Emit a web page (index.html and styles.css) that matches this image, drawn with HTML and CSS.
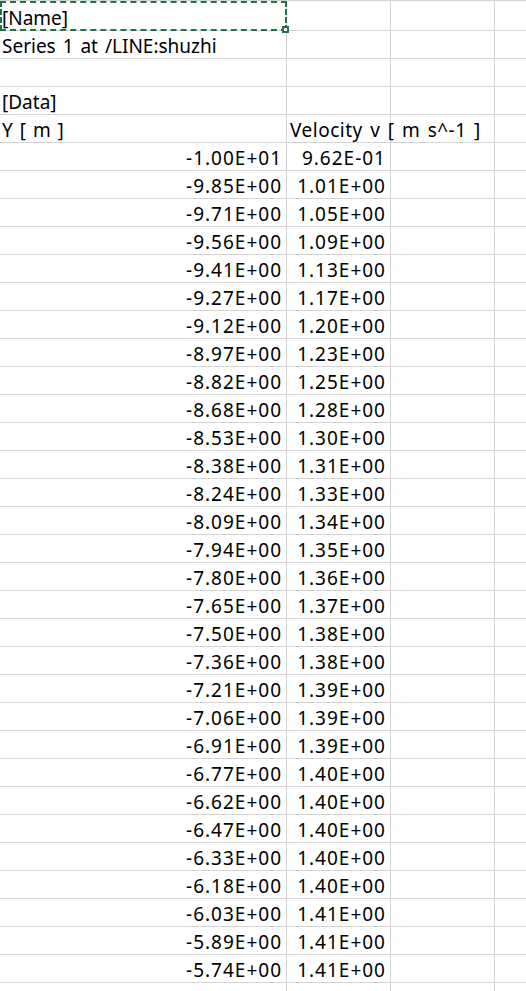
FILE: index.html
```html
<!DOCTYPE html>
<html>
<head>
<meta charset="utf-8">
<link rel="stylesheet" href="styles.css">
</head>
<body>
<div class="sheet">
<table class="grid">
<colgroup><col class="ca"><col class="cb"><col class="cc"><col class="cd"></colgroup>
<tbody id="rows">
<tr class="first"><td class="sel">[Name]<span class="handle"></span></td><td></td><td></td><td></td></tr>
<tr><td>Series 1 at /LINE:shuzhi</td><td></td><td></td><td></td></tr>
<tr><td></td><td></td><td></td><td></td></tr>
<tr><td>[Data]</td><td></td><td></td><td></td></tr>
<tr><td>Y [ m ]</td><td class="vel">Velocity v [ m s^-1 ]</td><td></td><td></td></tr>
<tr><td class="num">-1.00E+01</td><td class="num">9.62E-01</td><td></td><td></td></tr>
<tr><td class="num">-9.85E+00</td><td class="num">1.01E+00</td><td></td><td></td></tr>
<tr><td class="num">-9.71E+00</td><td class="num">1.05E+00</td><td></td><td></td></tr>
<tr><td class="num">-9.56E+00</td><td class="num">1.09E+00</td><td></td><td></td></tr>
<tr><td class="num">-9.41E+00</td><td class="num">1.13E+00</td><td></td><td></td></tr>
<tr><td class="num">-9.27E+00</td><td class="num">1.17E+00</td><td></td><td></td></tr>
<tr><td class="num">-9.12E+00</td><td class="num">1.20E+00</td><td></td><td></td></tr>
<tr><td class="num">-8.97E+00</td><td class="num">1.23E+00</td><td></td><td></td></tr>
<tr><td class="num">-8.82E+00</td><td class="num">1.25E+00</td><td></td><td></td></tr>
<tr><td class="num">-8.68E+00</td><td class="num">1.28E+00</td><td></td><td></td></tr>
<tr><td class="num">-8.53E+00</td><td class="num">1.30E+00</td><td></td><td></td></tr>
<tr><td class="num">-8.38E+00</td><td class="num">1.31E+00</td><td></td><td></td></tr>
<tr><td class="num">-8.24E+00</td><td class="num">1.33E+00</td><td></td><td></td></tr>
<tr><td class="num">-8.09E+00</td><td class="num">1.34E+00</td><td></td><td></td></tr>
<tr><td class="num">-7.94E+00</td><td class="num">1.35E+00</td><td></td><td></td></tr>
<tr><td class="num">-7.80E+00</td><td class="num">1.36E+00</td><td></td><td></td></tr>
<tr><td class="num">-7.65E+00</td><td class="num">1.37E+00</td><td></td><td></td></tr>
<tr><td class="num">-7.50E+00</td><td class="num">1.38E+00</td><td></td><td></td></tr>
<tr><td class="num">-7.36E+00</td><td class="num">1.38E+00</td><td></td><td></td></tr>
<tr><td class="num">-7.21E+00</td><td class="num">1.39E+00</td><td></td><td></td></tr>
<tr><td class="num">-7.06E+00</td><td class="num">1.39E+00</td><td></td><td></td></tr>
<tr><td class="num">-6.91E+00</td><td class="num">1.39E+00</td><td></td><td></td></tr>
<tr><td class="num">-6.77E+00</td><td class="num">1.40E+00</td><td></td><td></td></tr>
<tr><td class="num">-6.62E+00</td><td class="num">1.40E+00</td><td></td><td></td></tr>
<tr><td class="num">-6.47E+00</td><td class="num">1.40E+00</td><td></td><td></td></tr>
<tr><td class="num">-6.33E+00</td><td class="num">1.40E+00</td><td></td><td></td></tr>
<tr><td class="num">-6.18E+00</td><td class="num">1.40E+00</td><td></td><td></td></tr>
<tr><td class="num">-6.03E+00</td><td class="num">1.41E+00</td><td></td><td></td></tr>
<tr><td class="num">-5.89E+00</td><td class="num">1.41E+00</td><td></td><td></td></tr>
<tr><td class="num">-5.74E+00</td><td class="num">1.41E+00</td><td></td><td></td></tr>
<tr><td class="num">-5.59E+00</td><td class="num">1.41E+00</td><td></td><td></td></tr>
</tbody>
</table>
</div>
</body>
</html>
```

FILE: styles.css
```css
html, body {
  margin: 0;
  padding: 0;
  background: #ffffff;
}
.sheet {
  width: 526px;
  height: 991px;
  overflow: hidden;
}
.grid {
  border-collapse: separate;
  border-spacing: 0;
  table-layout: fixed;
  width: 599px;
  font-family: "Noto Sans", "Liberation Sans", sans-serif;
  font-size: 19px;
  color: #000000;
  border-top: 1px solid #d4d4d4;
  word-spacing: 2px;
}
.ca { width: 287px; }
.cb { width: 104px; }
.cc { width: 104px; }
.cd { width: 104px; }
.grid td {
  height: 26px;
  padding: 0 0 0 2px;
  border-right: 1px solid #d4d4d4;
  border-bottom: 1px solid #d4d4d4;
  white-space: nowrap;
  overflow: visible;
  vertical-align: bottom;
  line-height: 22px;
  box-sizing: content-box;
  padding-bottom: 1px;
}
.grid tr.first td {
  height: 28px;
}
.grid td.num {
  text-align: right;
  padding: 0 4px 1px 0;
  letter-spacing: 1px;
}
.grid td.vel {
  padding-left: 3px;
  letter-spacing: 0.5px;
  word-spacing: 2px;
}
.grid td.sel {
  position: relative;
  overflow: visible;
}
.grid td.sel::before {
  content: "";
  position: absolute;
  left: 0;
  top: 0;
  right: -1px;
  bottom: -1px;
  border: 2px dashed #217346;
  pointer-events: none;
}
.handle {
  position: absolute;
  right: -3px;
  bottom: -3px;
  width: 3px;
  height: 3px;
  border: 2px solid #217346;
  background: #ffffff;
}
```
